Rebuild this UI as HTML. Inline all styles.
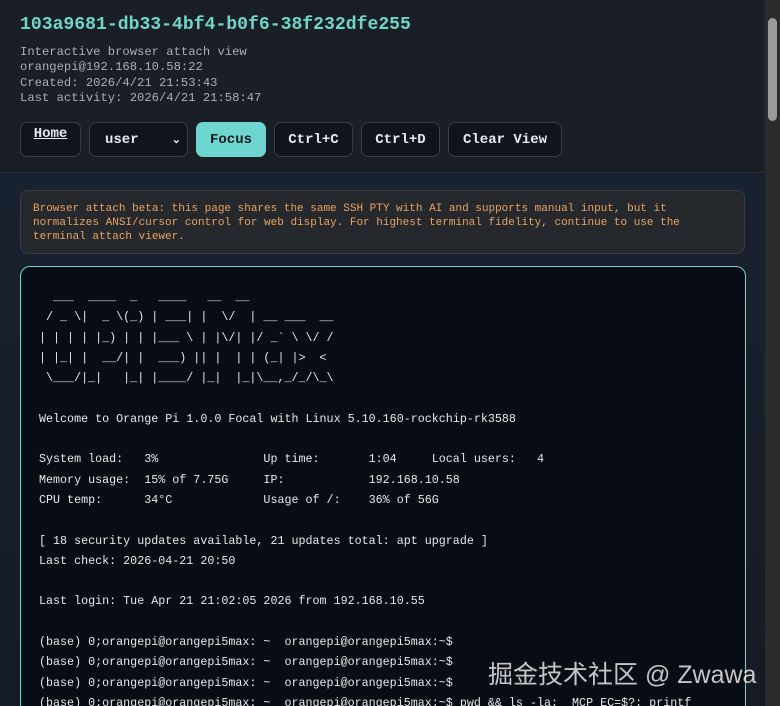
<!DOCTYPE html>
<html><head><meta charset="utf-8"><style>
*{box-sizing:border-box;margin:0;padding:0}
html,body{width:780px;height:706px;overflow:hidden;background:#181d25}
body{position:relative;font-family:"Liberation Mono",monospace}
.top{position:absolute;left:0;top:0;width:765px;height:173px;background:#1a1e25;border-bottom:1px solid #2a3240}
.main{position:absolute;left:0;top:174px;width:765px;height:532px;background:linear-gradient(180deg,#18212f,#161c26)}
h1{position:absolute;left:20px;top:15px;font-size:18.1px;color:#6fd6c9;font-weight:bold}
.meta{position:absolute;left:20px;top:45px;font-size:12.2px;line-height:15.3px;color:#a9afb8}
.btn{position:absolute;top:122px;height:35px;border:1px solid #363d48;border-radius:7px;background:#11151b;color:#e6e9ee;font-size:14px;display:flex;align-items:center;justify-content:center;font-weight:bold}
.focus{background:#6fd6cf;color:#0f1a1e;border-color:#6fd6cf}
.banner{position:absolute;left:20px;top:190px;width:725px;height:64px;border:1px solid #3b3d40;border-radius:8px;background:#25282c;color:#eda25f;font-size:11px;line-height:14.2px;padding:11px 12px}
.term{position:absolute;left:20px;top:266px;width:726px;height:460px;border:1px solid #6fd6cf;border-radius:10px;background:#080c14}
pre{position:absolute;left:18px;top:20px;font-family:"Liberation Mono","Noto Serif CJK SC",monospace;font-size:11.7px;line-height:20.3px;color:#e8e8e8}
.sb{position:absolute;left:765px;top:0;width:15px;height:706px;background:#2b2b2b}
.thumb{position:absolute;left:3px;top:18px;width:9px;height:103px;background:#9a9a9a;border-radius:5px}
.wm{position:absolute;left:488px;top:655px;font-family:"Liberation Sans","Noto Sans CJK SC",sans-serif;font-size:25px;color:rgba(230,230,230,0.85)}
</style></head><body>
<div class="top">
<h1>103a9681-db33-4bf4-b0f6-38f232dfe255</h1>
<div class="meta">Interactive browser attach view<br>orangepi@192.168.10.58:22<br>Created: 2026/4/21 21:53:43<br>Last activity: 2026/4/21 21:58:47</div>
<div class="btn" style="left:20px;width:61px;align-items:flex-start;padding-top:3px"><u>Home</u></div>
<div class="btn" style="left:89px;width:99px;justify-content:space-between;padding:0 6px 0 15px">user<span style="font-size:11px">&#8964;</span></div>
<div class="btn focus" style="left:196px;width:70px">Focus</div>
<div class="btn" style="left:274px;width:79px">Ctrl+C</div>
<div class="btn" style="left:361px;width:79px">Ctrl+D</div>
<div class="btn" style="left:448px;width:114px">Clear View</div>
</div>
<div class="main"></div>
<div class="banner">Browser attach beta: this page shares the same SSH PTY with AI and supports manual input, but it normalizes ANSI/cursor control for web display. For highest terminal fidelity, continue to use the terminal attach viewer.</div>
<div class="term"><pre>  ___  ____  _   ____   __  __
 / _ \|  _ \(_) | ___| |  \/  | __ ___  __
| | | | |_) | | |___ \ | |\/| |/ _` \ \/ /
| |_| |  __/| |  ___) || |  | | (_| |>  &lt;
 \___/|_|   |_| |____/ |_|  |_|\__,_/_/\_\

Welcome to Orange Pi 1.0.0 Focal with Linux 5.10.160-rockchip-rk3588

System load:   3%               Up time:       1:04     Local users:   4
Memory usage:  15% of 7.75G     IP:            192.168.10.58
CPU temp:      34°C             Usage of /:    36% of 56G

[ 18 security updates available, 21 updates total: apt upgrade ]
Last check: 2026-04-21 20:50

Last login: Tue Apr 21 21:02:05 2026 from 192.168.10.55

(base) 0;orangepi@orangepi5max: ~  orangepi@orangepi5max:~$
(base) 0;orangepi@orangepi5max: ~  orangepi@orangepi5max:~$
(base) 0;orangepi@orangepi5max: ~  orangepi@orangepi5max:~$
(base) 0;orangepi@orangepi5max: ~  orangepi@orangepi5max:~$ pwd &amp;&amp; ls -la;  MCP_EC=$?; printf</pre></div>
<div class="wm">掘金技术社区 @ Zwawa</div>
<div class="sb"><div class="thumb"></div></div>
</body></html>
